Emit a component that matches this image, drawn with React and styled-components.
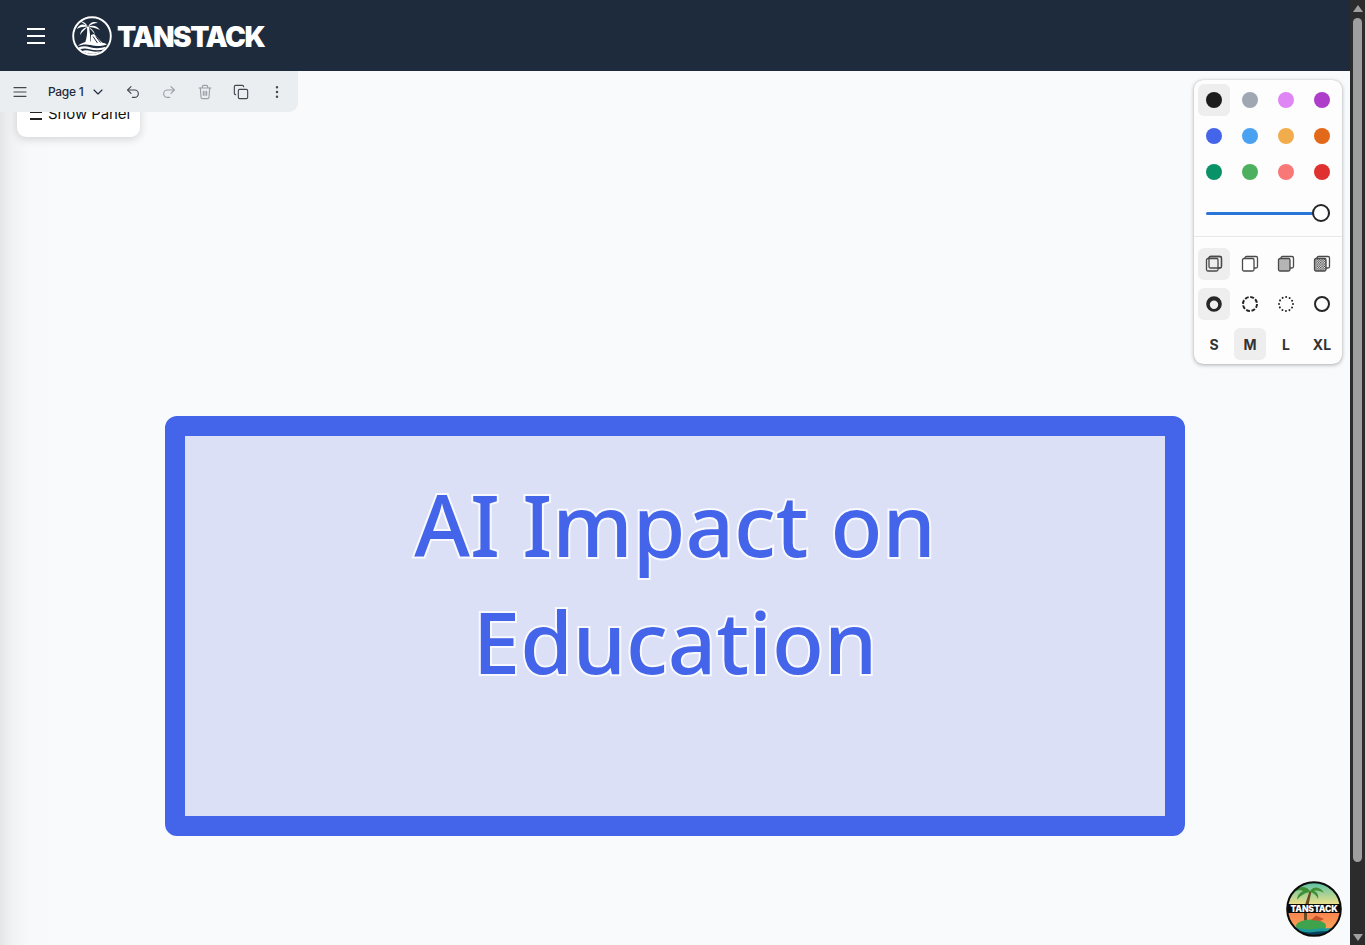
import React from 'react';
import styled, { createGlobalStyle } from 'styled-components';

const GlobalStyle = createGlobalStyle`
  html, body {
    margin: 0;
    height: 100%;
    overflow: hidden;
    background: #f9fafc;
    font-family: 'Inter', 'Liberation Sans', sans-serif;
  }
  #root { height: 100%; }
`;

const Shell = styled.div`
  display: flex;
  height: 945px;
  width: 1365px;
`;

const Page = styled.div`
  flex: 1;
  min-width: 0;
  display: flex;
  flex-direction: column;
`;

const Header = styled.header`
  height: 71px;
  flex: none;
  background: #1e2b3c;
  display: flex;
  align-items: center;
  padding-left: 27px;
  gap: 27px;
`;

const MenuButton = styled.button`
  width: 18px;
  height: 16px;
  padding: 0;
  border: 0;
  background: none;
  display: flex;
  flex-direction: column;
  justify-content: space-between;
  span {
    display: block;
    height: 2px;
    background: #fff;
  }
`;

const Brand = styled.div`
  display: flex;
  align-items: center;
  gap: 5px;
  margin-top: 1px;
`;

const BrandName = styled.span`
  margin-top: 1px;
  color: #fff;
  font-size: 28px;
  font-weight: 900;
  letter-spacing: -1.44px;
`;

const Canvas = styled.main`
  position: relative;
  flex: 1;
  background: linear-gradient(90deg, #e4e5e6 0, #f1f2f3 12px, #f8f9fb 30px, #f9fafc 60px);
`;

const Toolbar = styled.div`
  position: absolute;
  z-index: 2;
  left: 0;
  top: 0;
  width: 298px;
  height: 41px;
  box-sizing: border-box;
  background: #ebeef1;
  border-radius: 0 0 9px 0;
  display: flex;
  align-items: center;
  color: #2a2f36;
`;

const ToolIcon = styled.button`
  flex: none;
  width: ${(p) => p.$width || 36}px;
  height: 36px;
  padding: 0;
  border: 0;
  background: none;
  display: flex;
  align-items: center;
  justify-content: center;
  color: ${(p) => (p.$muted ? '#9aa0a6' : '#43484e')};
`;

const PageSelect = styled.div`
  width: 75px;
  display: flex;
  align-items: center;
  justify-content: space-between;
  padding: 0 9px 0 8px;
  box-sizing: border-box;
  font-size: 12px;
  font-weight: 500;
  letter-spacing: -0.3px;
  color: #1e2b3c;
`;

const PanelToggle = styled.div`
  position: absolute;
  z-index: 1;
  left: 17px;
  top: 20px;
  width: 123px;
  height: 46px;
  box-sizing: border-box;
  padding: 13px 0 0 13px;
  display: flex;
  gap: 6px;
  align-items: flex-start;
  background: #fff;
  border-radius: 9px;
  box-shadow: 0 2px 10px rgba(0, 0, 0, 0.16);
  font-size: 15px;
  letter-spacing: -0.1px;
  line-height: 20px;
  color: #111;
  i {
    display: block;
    width: 12px;
    height: 9px;
    margin-top: 7px;
    border-bottom: 2px solid #222;
    border-top: 2px solid #222;
    box-sizing: border-box;
  }
`;

const Style = styled.aside`
  position: absolute;
  z-index: 2;
  left: 1194px;
  top: 9px;
  width: 148px;
  box-sizing: border-box;
  background: #fdfdfd;
  border-radius: 9px;
  box-shadow: 0 1px 4px rgba(0, 0, 0, 0.3), 0 0 1px rgba(0, 0, 0, 0.2);
`;

const StyleGrid = styled.div`
  display: grid;
  grid-template-columns: repeat(4, 32px);
  grid-auto-rows: 32px;
  column-gap: 4px;
  row-gap: ${(p) => p.$gap || 4}px;
  padding: ${(p) => p.$pad || '4px'};
`;

const Cell = styled.button`
  padding: 0;
  border: 0;
  border-radius: 6px;
  background: ${(p) => (p.$on ? '#eeeeee' : 'transparent')};
  display: flex;
  align-items: center;
  justify-content: center;
  color: #333;
  font-family: 'Inter', 'Liberation Sans', sans-serif;
  font-size: 14px;
  font-weight: 700;
  line-height: 17px;
`;

const Swatch = styled.span`
  width: 16px;
  height: 16px;
  border-radius: 50%;
  background: ${(p) => p.$color};
`;

const SliderRow = styled.div`
  height: 45px;
  display: flex;
  align-items: center;
  padding: 2px 12px 0;
  border-bottom: 1px solid #e8e8e8;
  margin-top: -3px;
`;

const SliderTrack = styled.div`
  flex: 1;
  height: 3px;
  border-radius: 2px;
  background: #2a75d8;
  position: relative;
`;

const SliderThumb = styled.span`
  position: absolute;
  right: 0;
  top: -8px;
  width: 18px;
  height: 18px;
  box-sizing: border-box;
  border: 2px solid #262626;
  border-radius: 50%;
  background: #fff;
`;

const ShapeBox = styled.div`
  position: absolute;
  left: 165px;
  top: 345px;
  width: 1020px;
  height: 420px;
  box-sizing: border-box;
  border: 20px solid #4465e9;
  border-radius: 12px;
  background-clip: padding-box;
`;

const ShapeFill = styled.div`
  height: 100%;
  box-sizing: border-box;
  padding-top: 30px;
  background: #dce0f7;
  text-align: center;
`;

const ShapeText = styled.div`
  font-family: 'Noto Sans', 'DejaVu Sans', sans-serif;
  font-size: 85px;
  font-weight: 550;
  line-height: 117px;
  color: #4465e9;
  -webkit-text-stroke: 4px #f8f9fe;
  paint-order: stroke fill;
`;

const Badge = styled.div`
  position: absolute;
  z-index: 2;
  left: 1286px;
  top: 810px;
  width: 56px;
  height: 56px;
`;

const Scrollbar = styled.div`
  flex: none;
  width: 15px;
  background: #2c2c2c;
  display: flex;
  flex-direction: column;
  align-items: center;
`;

const ScrollArrow = styled.div`
  flex: none;
  width: 0;
  height: 0;
  margin: ${(p) => (p.$down ? '0 0 4px' : '5px 0 0')};
  border-left: 5px solid transparent;
  border-right: 5px solid transparent;
  ${(p) => (p.$down ? 'border-top: 7px solid #a0a0a0;' : 'border-bottom: 7px solid #a0a0a0;')}
`;

const ScrollThumb = styled.div`
  flex: 1;
  width: 9px;
  margin: 6px 0 72px;
  background: #9f9f9f;
  border-radius: 5px;
`;

const swatches = [
  '#1d1d1d', '#9fa8b2', '#e085f4', '#ae3ec9',
  '#4465e9', '#4ba1f1', '#f1ac4b', '#e16919',
  '#099268', '#4cb05e', '#f87777', '#e03131',
];

const Fill = ({ kind }) => (
  <svg width="18" height="18" viewBox="0 0 18 18" fill="none" stroke="#4a4a4a" strokeWidth="1.3" strokeLinejoin="round">
    <defs>
      <pattern id="dots" width="2.4" height="2.4" patternUnits="userSpaceOnUse">
        <rect width="2.4" height="2.4" fill="#fff" stroke="none" />
        <rect width="1.2" height="1.2" fill="#333" stroke="none" />
        <rect x="1.2" y="1.2" width="1.2" height="1.2" fill="#333" stroke="none" />
      </pattern>
    </defs>
    <path d="M4 3 a1.5 1.5 0 0 1 1.5-1.5 h9.5 a1.5 1.5 0 0 1 1.5 1.5 v8.5 a1.5 1.5 0 0 1-1.5 1.5 h-2" />
    <rect
      x="1.5"
      y="3.5"
      width="11.5"
      height="12.5"
      rx="1.5"
      fill={kind === 'solid' ? '#b5b5b5' : kind === 'pattern' ? 'url(#dots)' : kind === 'semi' ? '#fff' : 'none'}
    />
    {kind === 'none' && <rect x="4" y="1.5" width="12.5" height="11.5" rx="1.5" />}
  </svg>
);

const Stroke = ({ dash, dots }) => (
  <svg width="18" height="18" viewBox="0 0 18 18" fill="none">
    <circle
      cx="9"
      cy="9"
      r="7"
      stroke="#262626"
      strokeWidth="2"
      strokeLinecap={dots ? 'round' : 'butt'}
      strokeDasharray={dash}
    />
  </svg>
);

const DrawStroke = () => (
  <svg width="18" height="18" viewBox="0 0 18 18">
    <path
      fillRule="evenodd"
      fill="#262626"
      d="M9 1.2a7.8 7.8 0 1 0 0 15.6a7.8 7.8 0 1 0 0-15.6Z M9 5.6a4.2 4.2 0 1 1 0 8.4a4.2 4.2 0 1 1 0-8.4Z"
    />
  </svg>
);

const Logo = () => (
  <svg width="40" height="40" viewBox="0 0 40 40" fill="#fff">
    <circle cx="20" cy="20" r="18.8" fill="none" stroke="#fff" strokeWidth="1.9" />
    <path d="M16 11 C12 7 7 8 5 13 C8 11 12 10.5 16 11Z" />
    <path d="M16 11 C14 6 10 5 8 5.5 C11 6.5 13 8.5 16 11Z" />
    <path d="M16 11 C18 6 22 5 26 7 C22 7 19 8.5 16 11Z" />
    <path d="M16 11 C20 8.5 25 9.5 28 14 C24 12 20 11 16 11Z" />
    <path d="M16 11 C12 11.5 8.5 14.5 8 19 C10.5 15.5 13 13 16 11Z" />
    <path d="M16 11 C19 12 22 14.5 23 18.5 C20.5 15 18.5 13 16 11Z" />
    <path d="M15 11 C15.5 16 15 22 13 27 L18.5 27 C18.5 21 17.8 16 17 11Z" />
    <path d="M5.5 30 C10 26.5 14 25 19 25.5 L19 19 L22 18 L30 26.5 C32 27 34 27.6 35 28.5 C28 30.5 24 30.5 18.5 29 C14 28 9.5 28.4 5.5 30Z" />
    <path d="M21 20.5 L25.5 27 M24 20.5 L28.5 26.5" fill="none" stroke="#1e2b3c" strokeWidth="1" />
    <path d="M6.4 31.6 C10 30 14 30 18 31.2 C23 32.6 29 32.4 33.8 30.8 C33.2 32 32.6 32.8 32 33.4 C27 34.6 22 34.4 17.6 33.2 C14 32.2 11 32.2 8 33.4 C7.4 32.8 6.8 32.2 6.4 31.6Z" />
    <path d="M10 35 C13 33.8 16 34.2 19 35 C22 35.8 25 35.8 28.6 35.2 C26 37 23 37.8 20 37.8 C16 37.8 13 36.8 10 35Z" />
  </svg>
);

const BadgeArt = () => (
  <svg width="56" height="56" viewBox="0 0 56 56">
    <defs>
      <clipPath id="disc">
        <circle cx="28" cy="28" r="26.5" />
      </clipPath>
      <linearGradient id="sky" x1="0" y1="0" x2="0" y2="1">
        <stop offset="0" stopColor="#4fbfa6" />
        <stop offset="1" stopColor="#efe08a" />
      </linearGradient>
      <linearGradient id="sunset" x1="0" y1="0" x2="0" y2="1">
        <stop offset="0" stopColor="#f9834f" />
        <stop offset="1" stopColor="#f8b15a" />
      </linearGradient>
    </defs>
    <g clipPath="url(#disc)">
      <rect width="56" height="24" fill="url(#sky)" />
      <rect y="31" width="56" height="25" fill="url(#sunset)" />
      <path d="M19 24 C21 18 22 15 23.5 10 L25.5 10 C24.5 15 23.5 19 22.5 24 Z" fill="#6b4a22" />
      <path d="M24 10 C20 4 12 5 8 11 C12 9 15 9 17 10 C13 12 11 15 11 19 C14 15 18 12 24 11 C28 12 31 15 32 18 C33 14 31 11 28 10 C31 9 35 10 38 12 C35 6 28 4 24 10 Z" fill="#3f8f35" />
      <path d="M18 31 L18 40 L21 40 L21 31 Z" fill="#6b4a22" />
      <ellipse cx="25" cy="45" rx="15" ry="6.5" fill="#3fa34d" />
      <path d="M25 39 L30 34.5 L38 38 L34 40 Z" fill="#c8552b" />
      <path d="M0 47 C10 44 18 50 28 48 C38 46 46 49 56 45 V56 H0 Z" fill="#1a9a9a" />
      <path d="M0 50 C10 47.5 18 53 28 51 C38 49 46 52 56 49 V56 H0 Z" fill="#0a3f5c" />
      <rect y="23" width="56" height="9" fill="#0b0b0b" />
    </g>
    <text
      x="28"
      y="31"
      textAnchor="middle"
      fontFamily="Inter, 'Liberation Sans', sans-serif"
      fontSize="8.6"
      fontWeight="900"
      letterSpacing="-0.2"
      fill="#fff"
    >
      TANSTACK
    </text>
    <circle cx="28" cy="28" r="26.8" fill="none" stroke="#0b0b0b" strokeWidth="2" />
  </svg>
);

const Icon = ({ children }) => (
  <svg width="16" height="16" viewBox="0 0 24 24" fill="none" stroke="currentColor" strokeWidth="1.7" strokeLinecap="round" strokeLinejoin="round">
    {children}
  </svg>
);

function App() {
  return (
    <Shell>
      <GlobalStyle />
      <Page>
        <Header>
          <MenuButton aria-label="Menu">
            <span />
            <span />
            <span />
          </MenuButton>
          <Brand>
            <Logo />
            <BrandName>TANSTACK</BrandName>
          </Brand>
        </Header>
        <Canvas>
          <Toolbar>
            <ToolIcon $width={40}>
              <Icon>
                <path d="M3 5.5h18M3 12h18M3 18.5h18" />
              </Icon>
            </ToolIcon>
            <PageSelect>
              Page 1
              <Icon>
                <path d="M6 9l6 6 6-6" />
              </Icon>
            </PageSelect>
            <ToolIcon>
              <Icon>
                <path d="M9 14L4 9l5-5" />
                <path d="M4 9h10.5a5.5 5.5 0 0 1 0 11H11" />
              </Icon>
            </ToolIcon>
            <ToolIcon $muted>
              <Icon>
                <path d="M15 14l5-5-5-5" />
                <path d="M20 9H9.5a5.5 5.5 0 0 0 0 11H13" />
              </Icon>
            </ToolIcon>
            <ToolIcon $muted>
              <Icon>
                <path d="M3 6h18M8 6V4a2 2 0 0 1 2-2h4a2 2 0 0 1 2 2v2" />
                <path d="M19 6l-1 14a2 2 0 0 1-2 2H8a2 2 0 0 1-2-2L5 6" />
                <path d="M9.5 11v6M12 11v6M14.5 11v6" />
              </Icon>
            </ToolIcon>
            <ToolIcon>
              <Icon>
                <rect x="8" y="8" width="14" height="14" rx="2" />
                <path d="M4 16c-1.1 0-2-.9-2-2V4c0-1.1.9-2 2-2h10c1.1 0 2 .9 2 2" />
              </Icon>
            </ToolIcon>
            <ToolIcon>
              <Icon>
                <circle cx="12" cy="5" r="1" />
                <circle cx="12" cy="12" r="1" />
                <circle cx="12" cy="19" r="1" />
              </Icon>
            </ToolIcon>
          </Toolbar>
          <PanelToggle>
            <i />
            Show Panel
          </PanelToggle>
          <Style>
            <StyleGrid>
              {swatches.map((c, i) => (
                <Cell key={c} $on={i === 0}>
                  <Swatch $color={c} />
                </Cell>
              ))}
            </StyleGrid>
            <SliderRow>
              <SliderTrack>
                <SliderThumb />
              </SliderTrack>
            </SliderRow>
            <StyleGrid $gap={8} $pad="11px 4px 4px">
              <Cell $on>
                <Fill kind="none" />
              </Cell>
              <Cell>
                <Fill kind="semi" />
              </Cell>
              <Cell>
                <Fill kind="solid" />
              </Cell>
              <Cell>
                <Fill kind="pattern" />
              </Cell>
              <Cell $on>
                <DrawStroke />
              </Cell>
              <Cell>
                <Stroke dash="3.9 1.6" />
              </Cell>
              <Cell>
                <Stroke dots dash="0.01 3.65" />
              </Cell>
              <Cell>
                <Stroke />
              </Cell>
              <Cell>S</Cell>
              <Cell $on>M</Cell>
              <Cell>L</Cell>
              <Cell>XL</Cell>
            </StyleGrid>
          </Style>
          <ShapeBox>
            <ShapeFill>
              <ShapeText>
                AI Impact on
                <br />
                Education
              </ShapeText>
            </ShapeFill>
          </ShapeBox>
          <Badge>
            <BadgeArt />
          </Badge>
        </Canvas>
      </Page>
      <Scrollbar>
        <ScrollArrow />
        <ScrollThumb />
        <ScrollArrow $down />
      </Scrollbar>
    </Shell>
  );
}

export default App;
